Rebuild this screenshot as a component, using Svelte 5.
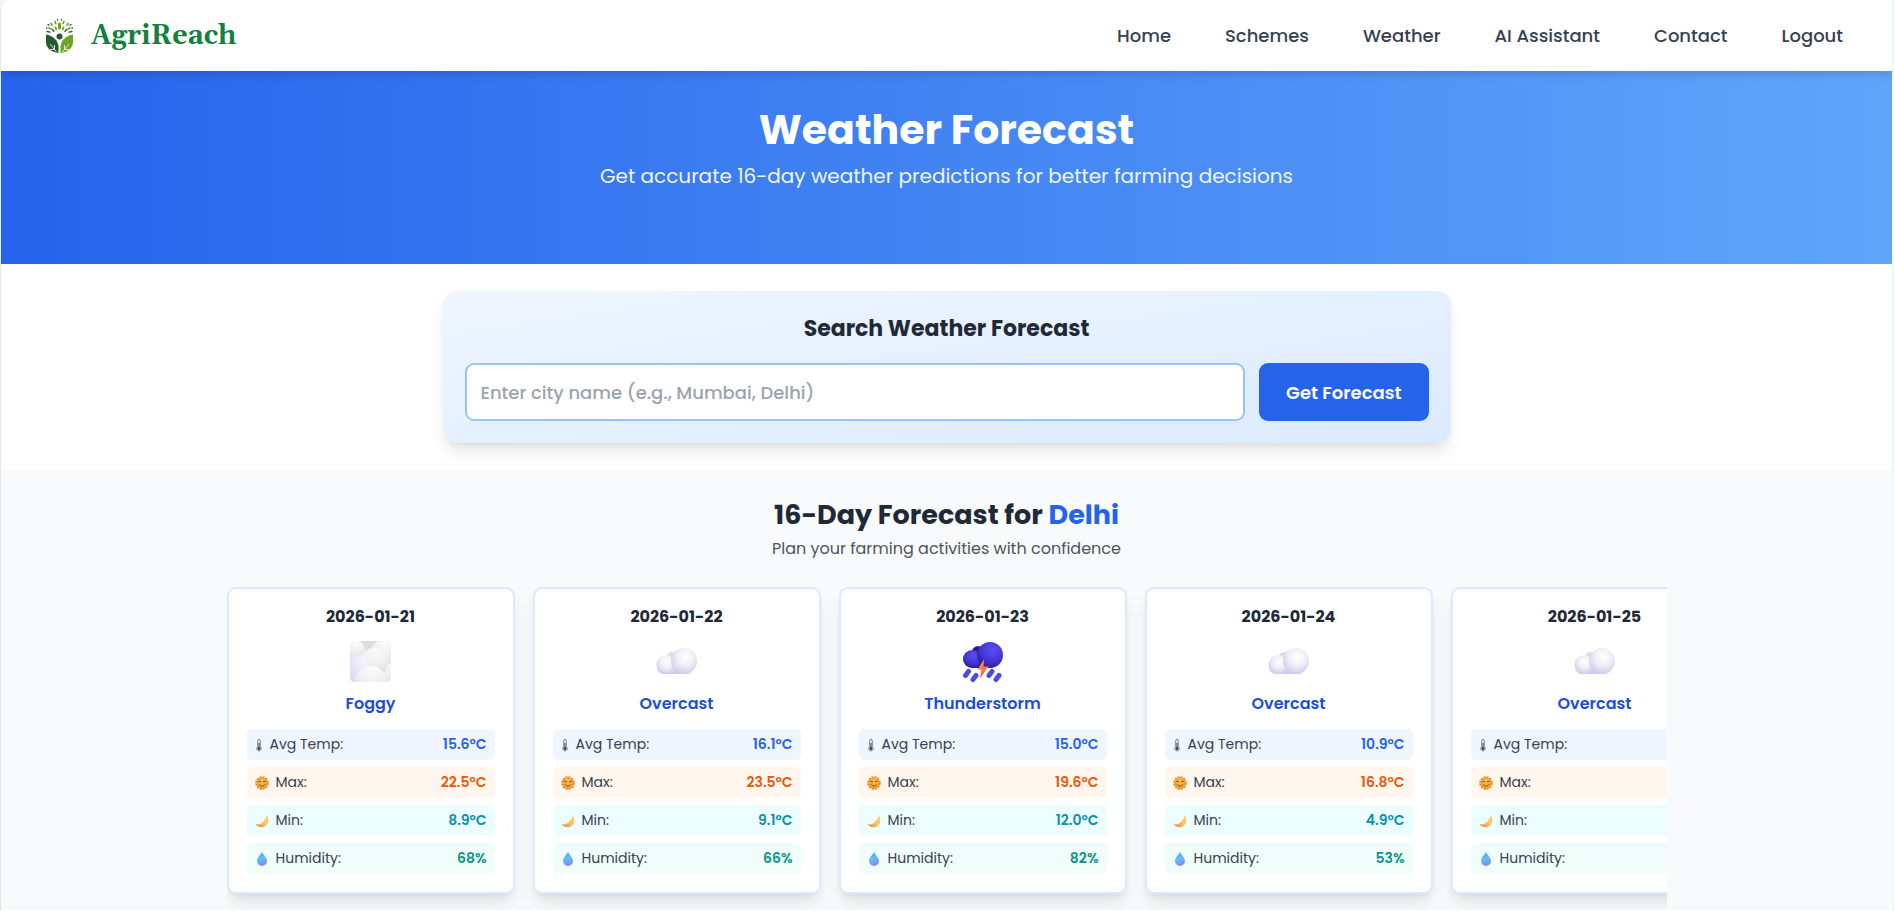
<script>
    let city = '';
    let place = 'Delhi';

    const links = ['Home', 'Schemes', 'Weather', 'AI Assistant', 'Contact', 'Logout'];

    const days = [
        { date: '2026-01-21', status: 'Foggy', avg: '15.6', max: '22.5', min: '8.9', humidity: 68 },
        { date: '2026-01-22', status: 'Overcast', avg: '16.1', max: '23.5', min: '9.1', humidity: 66 },
        { date: '2026-01-23', status: 'Thunderstorm', avg: '15.0', max: '19.6', min: '12.0', humidity: 82 },
        { date: '2026-01-24', status: 'Overcast', avg: '10.9', max: '16.8', min: '4.9', humidity: 53 },
        { date: '2026-01-25', status: 'Overcast', avg: '11.8', max: '18.2', min: '6.1', humidity: 57 }
    ];

    const handleSearch = () => {
        if (city.trim()) {
            place = city.trim();
        }
    };
</script>

<!-- Shared gradients for the weather icons -->
<svg class="defs" width="0" height="0" aria-hidden="true">
    <defs>
        <radialGradient id="puff" cx="0.55" cy="0.35" r="0.7">
            <stop offset="0" stop-color="#ffffff" />
            <stop offset="0.45" stop-color="#f1f0f5" />
            <stop offset="1" stop-color="#cdc5ec" />
        </radialGradient>
        <linearGradient id="base" x1="0" y1="0" x2="0" y2="1">
            <stop offset="0" stop-color="#e9e7ef" />
            <stop offset="1" stop-color="#cfc5f2" />
        </linearGradient>
        <radialGradient id="fog" cx="0.55" cy="0.1" r="0.9">
            <stop offset="0" stop-color="#fbfbfb" />
            <stop offset="0.5" stop-color="#f0f0f1" />
            <stop offset="1" stop-color="#dddbe4" />
        </radialGradient>
        <radialGradient id="fogLilac" cx="0.8" cy="0.2" r="0.9">
            <stop offset="0" stop-color="#f6f5fb" />
            <stop offset="1" stop-color="#dcd5f4" />
        </radialGradient>
        <radialGradient id="storm" cx="0.6" cy="0.3" r="0.75">
            <stop offset="0" stop-color="#5b4cf6" />
            <stop offset="0.6" stop-color="#4434d6" />
            <stop offset="1" stop-color="#2e1a94" />
        </radialGradient>
        <linearGradient id="bolt" x1="0" y1="0" x2="0" y2="1">
            <stop offset="0" stop-color="#ffa048" />
            <stop offset="1" stop-color="#fc4a55" />
        </linearGradient>
        <radialGradient id="sun" cx="0.5" cy="0.4" r="0.6">
            <stop offset="0" stop-color="#ffc83c" />
            <stop offset="1" stop-color="#e8942c" />
        </radialGradient>
        <linearGradient id="moon" x1="0" y1="1" x2="1" y2="0">
            <stop offset="0" stop-color="#d08a55" />
            <stop offset="0.5" stop-color="#ffbf5c" />
            <stop offset="1" stop-color="#ffd07a" />
        </linearGradient>
        <linearGradient id="drop" x1="0" y1="0" x2="0.3" y2="1">
            <stop offset="0" stop-color="#3f9be0" />
            <stop offset="0.55" stop-color="#5cc2f8" />
            <stop offset="1" stop-color="#8a86f4" />
        </linearGradient>
        <clipPath id="fogClip"><rect x="0" y="0" width="41" height="41" rx="5" /></clipPath>
    </defs>
</svg>

<div class="page">
    <header>
        <a class="brand" href="#home">
            <svg viewBox="0 0 45 45" aria-hidden="true">
                <g fill="none" stroke-linecap="round">
                    <path stroke="#6ca521" stroke-width="3" d="M22.500 11v4" />
                    <path stroke="#6ca521" stroke-width="1.700" d="M18 8.500l.8 2M27 8.500l-.8 2M14 10.500l1 1.500M31 10.500l-1 1.500M12 15l2 1M33 15l-2 1M18.500 14l.7 2.500M26.500 14l-.7 2.500" />
                    <path stroke="#28592c" stroke-width="1.300" d="M20.500 6.500v.5M24.500 6.500v.5M11 11.500l1 .6M34 11.500l-1 .6M9.500 15h.5M35.500 15h-.5M10 18.500l3 .7M35 18.500l-3 .7M15.500 16.500l1.500 2M29.500 16.500l-1.500 2" />
                </g>
                <circle cx="22.500" cy="23.500" r="3" fill="#28592c" />
                <path fill="#28592c" d="M9 21.500c7 1 12 6 12.500 12v6.500C14 39 9 35 9 29z" />
                <path fill="#6ca521" d="M36 21.500c-7 1-12 6-12.500 12v6.500C31 39 36 35 36 29z" />
                <path stroke="#fff" stroke-width="0.800" fill="none" d="M13 31l6.500 8M32 31l-6.500 8M17.500 32v4.500H13M27.500 32v4.500H32" />
            </svg>
            <span>AgriReach</span>
        </a>
        <nav>
            {#each links as link}
                <a href="#{link.toLowerCase().replace(' ', '-')}">{link}</a>
            {/each}
        </nav>
    </header>

    <section class="hero">
        <h1>Weather Forecast</h1>
        <p>Get accurate 16-day weather predictions for better farming decisions</p>
    </section>

    <section class="search">
        <form on:submit|preventDefault={handleSearch}>
            <h2>Search Weather Forecast</h2>
            <div class="fields">
                <input
                        type="text"
                        aria-label="City name"
                        placeholder="Enter city name (e.g., Mumbai, Delhi)"
                        bind:value={city}
                />
                <button type="submit">Get Forecast</button>
            </div>
        </form>
    </section>

    <section class="forecast">
        <h2>16-Day Forecast for <span>{place}</span></h2>
        <p class="hint">Plan your farming activities with confidence</p>

        <div class="days">
            {#each days as day}
                <article>
                    <h3>{day.date}</h3>
                    <svg class="sky" viewBox="0 0 42 42" aria-hidden="true">
                        {#if day.status === 'Foggy'}
                            <g clip-path="url(#fogClip)">
                                <rect width="42" height="42" fill="#dddce1" />
                                <circle cx="34" cy="13" r="14" fill="url(#fog)" />
                                <circle cx="5" cy="9" r="10" fill="url(#fog)" />
                                <circle cx="43" cy="34" r="12" fill="url(#fog)" />
                                <circle cx="24" cy="21" r="14" fill="url(#fog)" />
                                <circle cx="6" cy="27" r="14" fill="url(#fogLilac)" />
                                <circle cx="21" cy="41" r="16" fill="url(#fog)" />
                            </g>
                        {:else if day.status === 'Thunderstorm'}
                            <circle cx="16" cy="11" r="6" fill="#2e1a94" />
                            <rect x="6" y="16" width="28" height="11" rx="5" fill="#321e9f" />
                            <circle cx="10" cy="18" r="9" fill="url(#storm)" />
                            <circle cx="28" cy="14" r="13" fill="url(#storm)" />
                            <path stroke="#4f4be0" stroke-width="5" stroke-linecap="round" d="M3.500 34.500l3-4M11 38.500l3-4M27 34.500l3-4M34 38.500l3-4" />
                            <path fill="url(#bolt)" d="M22 18.500 15.500 28.500h4l-1.500 9 8.500-12h-5z" />
                        {:else}
                            <circle cx="16" cy="16" r="5" fill="#dddce0" />
                            <rect x="1" y="19" width="36" height="14" rx="7" fill="url(#base)" />
                            <circle cx="10" cy="23.500" r="9.500" fill="url(#puff)" />
                            <circle cx="28" cy="20" r="13" fill="url(#puff)" />
                        {/if}
                    </svg>
                    <p class="status">{day.status}</p>

                    <dl>
                        <div class="avg">
                            <dt>
                                <svg class="thermo" viewBox="0 0 8 14" aria-hidden="true">
                                    <path fill="#fff" stroke="#6b7280" d="M2.800 2.500a1.200 1.200 0 0 1 2.400 0v6.200a2.200 2.200 0 1 1-2.400 0z" />
                                    <path stroke="#374151" d="M4 5v5" />
                                    <circle cx="4" cy="10.500" r="1.400" fill="#374151" />
                                </svg>
                                Avg Temp:
                            </dt>
                            <dd>{day.avg}°C</dd>
                        </div>
                        <div class="max">
                            <dt>
                                <svg viewBox="0 0 14 14" aria-hidden="true">
                                    <circle cx="7" cy="7" r="5.800" fill="none" stroke="#e8863a" stroke-width="2" stroke-dasharray="2.200 0.800" />
                                    <circle cx="7" cy="7" r="5.400" fill="url(#sun)" />
                                    <path fill="none" stroke="#7d4a1c" stroke-width="0.900" stroke-linecap="round" d="M3.500 5.300l2.300.5M10.500 5.300l-2.300.5M4.500 8.700c1.300 1.700 3.700 1.700 5 0" />
                                </svg>
                                Max:
                            </dt>
                            <dd>{day.max}°C</dd>
                        </div>
                        <div class="min">
                            <dt>
                                <svg viewBox="0 0 14 14" aria-hidden="true">
                                    <path fill="url(#moon)" d="M11.500 1c2.500 3 2.600 7.500-.2 10.300C8.300 14.300 3 14 .5 10.300c4 .5 6-.8 7.800-2.800C10.300 5.500 11.400 3.500 11.500 1z" />
                                </svg>
                                Min:
                            </dt>
                            <dd>{day.min}°C</dd>
                        </div>
                        <div class="humidity">
                            <dt>
                                <svg viewBox="0 0 14 14" aria-hidden="true">
                                    <path fill="url(#drop)" d="M7 0c1 2.500 5 5.500 5 9a5 5 0 0 1-10 0c0-3.500 4-6.500 5-9z" />
                                </svg>
                                Humidity:
                            </dt>
                            <dd>{day.humidity}%</dd>
                        </div>
                    </dl>
                </article>
            {/each}
        </div>
    </section>
</div>

<style>
    :global(body) {
        background: #f3f4f6;
        font-family: Poppins, Inter, "Open Sans", sans-serif;
        color: #1f2937;
    }

    .defs {
        display: block;
    }

    h1, h2, h3, p, dl, dd {
        margin: 0;
    }

    .page {
        box-sizing: border-box;
        min-height: 100vh;
        border-left: 1px solid #e5e7eb;
        border-right: 2px solid #f3f4f6;
        border-top-left-radius: 10px;
        background: #fff;
        overflow: hidden;
    }

    header {
        position: relative;
        display: flex;
        align-items: center;
        justify-content: space-between;
        padding: 13px 49px 13px 36px;
        background: #fff;
        box-shadow: 0 4px 7px rgba(0, 0, 0, 0.12);
    }

    .brand {
        display: flex;
        align-items: center;
        gap: 9px;
        font-family: Gelasio, "DejaVu Serif", Georgia, serif;
        font-size: 27px;
        line-height: 36px;
        font-weight: 700;
        color: #15803d;
        text-decoration: none;
    }

    .brand svg {
        width: 45px;
        height: 45px;
    }

    nav {
        display: flex;
        gap: 54px;
    }

    nav a {
        font-size: 18px;
        line-height: 27px;
        font-weight: 500;
        color: #374151;
        text-decoration: none;
    }

    .hero {
        padding: 36px 18px 72px;
        background: linear-gradient(to right, #2563eb, #60a5fa);
        text-align: center;
        color: #fff;
    }

    .hero h1 {
        font-size: 41px;
        line-height: 45px;
        font-weight: 700;
    }

    .hero p {
        margin-top: 9px;
        font-size: 20px;
        line-height: 31px;
        color: #eff6ff;
    }

    .search {
        padding: 27px 18px;
    }

    form {
        box-sizing: border-box;
        max-width: 1008px;
        margin: 0 auto;
        padding: 22px;
        border-radius: 14px;
        background: linear-gradient(to bottom right, #eff6ff, #dbeafe);
        box-shadow: 0 11px 17px -3px rgba(0, 0, 0, 0.1), 0 4px 7px -4px rgba(0, 0, 0, 0.1);
    }

    form h2 {
        font-size: 22px;
        line-height: 31px;
        font-weight: 700;
        text-align: center;
    }

    .fields {
        display: flex;
        gap: 14px;
        margin-top: 19px;
    }

    input {
        flex: 1;
        min-width: 0;
        box-sizing: border-box;
        height: 58px;
        padding: 0 14px;
        border: 2px solid #93c5fd;
        border-radius: 9px;
        background: #fff;
        font-family: inherit;
        font-size: 18px;
        font-weight: 500;
        color: #1f2937;
        outline: none;
    }

    input::placeholder {
        color: #9ca3af;
    }

    button {
        padding: 0 27px;
        border: none;
        border-radius: 9px;
        background: #2563eb;
        font-family: inherit;
        font-size: 18px;
        font-weight: 600;
        color: #fff;
        cursor: pointer;
    }

    button:hover {
        background: #1d4ed8;
    }

    .forecast {
        padding: 27px 18px 0;
        background: #f9fafb;
        text-align: center;
    }

    .forecast h2 {
        font-size: 27px;
        line-height: 36px;
        font-weight: 700;
    }

    .forecast h2 span {
        color: #2563eb;
    }

    .hint {
        margin-top: 4px;
        font-size: 16px;
        line-height: 23px;
        color: #4b5563;
    }

    .days {
        display: flex;
        gap: 18px;
        max-width: 1440px;
        margin: 0 auto;
        padding: 27px 0 16px;
        overflow-x: auto;
        scrollbar-width: none;
    }

    article {
        flex: 0 0 288px;
        box-sizing: border-box;
        padding: 16px 18px 18px;
        border: 2px solid #dbeafe;
        border-radius: 9px;
        background: #fff;
        box-shadow: 0 11px 17px -3px rgba(0, 0, 0, 0.1), 0 4px 7px -4px rgba(0, 0, 0, 0.1);
    }

    h3 {
        font-size: 16px;
        line-height: 23px;
        font-weight: 700;
    }

    .sky {
        display: block;
        width: 42px;
        height: 42px;
        margin: 13px auto 9px;
    }

    .status {
        font-size: 16px;
        line-height: 23px;
        font-weight: 600;
        color: #1d4ed8;
    }

    dl {
        display: grid;
        gap: 7px;
        margin-top: 14px;
    }

    dl div {
        display: flex;
        align-items: center;
        justify-content: space-between;
        padding: 4px 8px;
        border-radius: 5px;
        font-size: 14px;
        line-height: 23px;
    }

    dt {
        display: flex;
        align-items: center;
        gap: 7px;
        font-weight: 400;
        color: #374151;
    }

    dt svg {
        width: 14px;
        height: 14px;
    }

    dt .thermo {
        width: 8px;
    }

    dd {
        font-weight: 600;
    }

    .avg {
        background: #eff6ff;
    }

    .avg dd {
        color: #2563eb;
    }

    .max {
        background: #fff7ed;
    }

    .max dd {
        color: #ea580c;
    }

    .min {
        background: #ecfeff;
    }

    .min dd {
        color: #0891b2;
    }

    .humidity {
        background: #f0fdfa;
    }

    .humidity dd {
        color: #0d9488;
    }
</style>
